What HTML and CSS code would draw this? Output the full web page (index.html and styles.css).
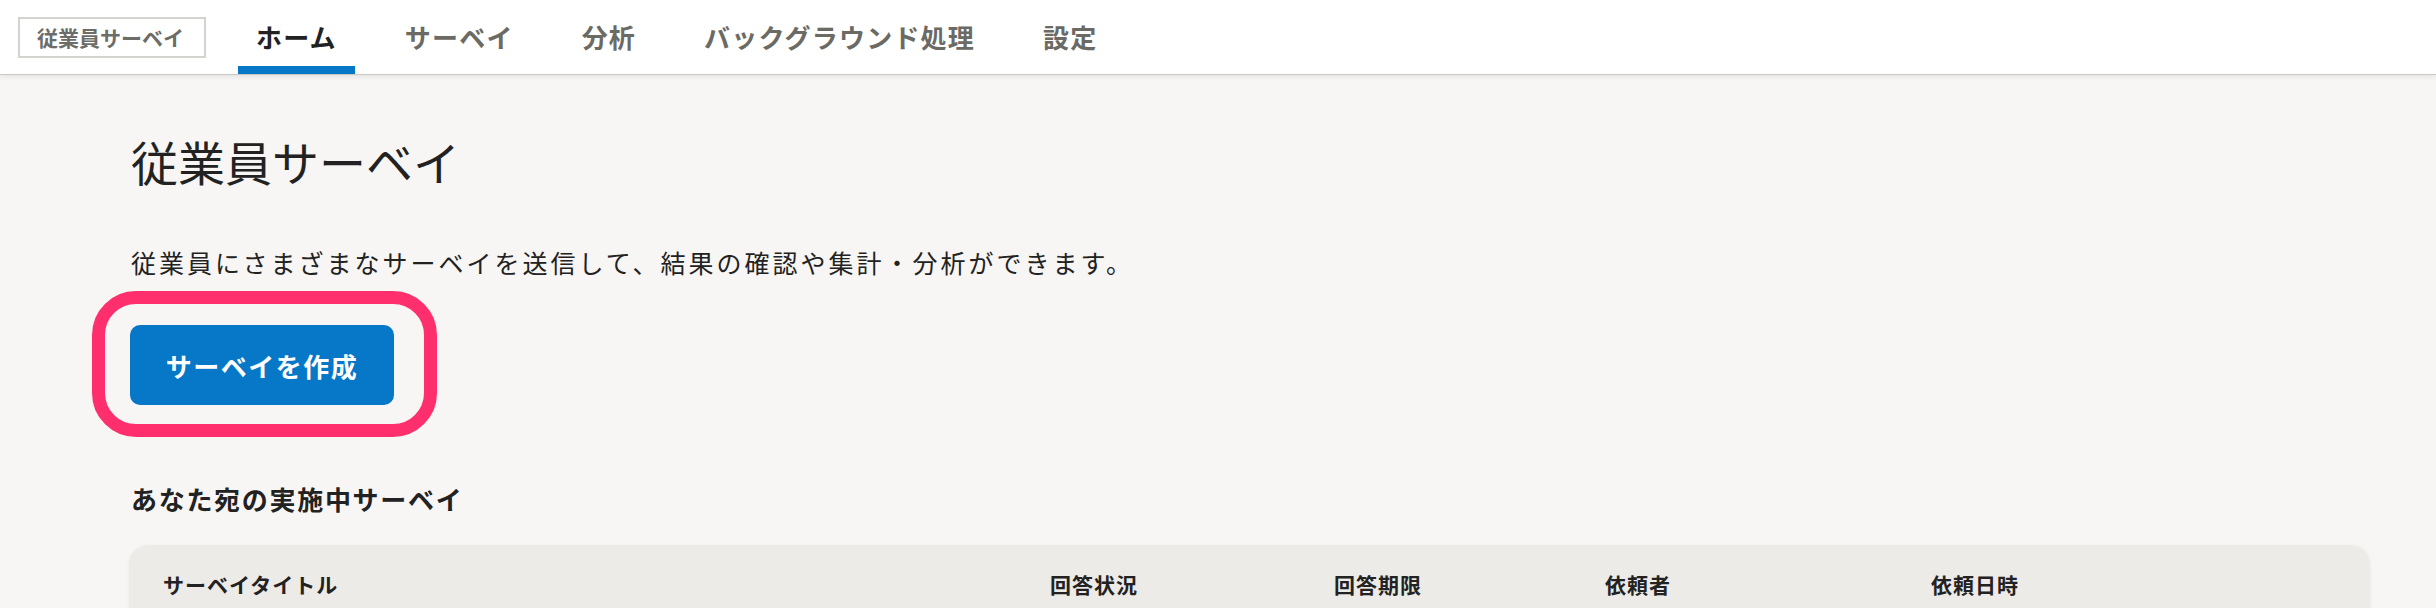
FILE: index.html
```html
<!DOCTYPE html>
<html lang="ja">
<head>
<meta charset="utf-8">
<title>従業員サーベイ</title>
<link rel="stylesheet" href="styles.css">
</head>
<body>
<header class="nav">
  <div class="logo">従業員サーベイ</div>
  <a class="tab active">ホーム</a>
  <a class="tab">サーベイ</a>
  <a class="tab">分析</a>
  <a class="tab">バックグラウンド処理</a>
  <a class="tab">設定</a>
</header>
<main class="main">
  <h1 class="title">従業員サーベイ</h1>
  <p class="desc">従業員にさまざまなサーベイを送信して、結果の確認や集計・分析ができます。</p>
  <div class="cta">
    <button class="btn">サーベイを作成</button>
    <span class="ring"></span>
  </div>
  <h2 class="section">あなた宛の実施中サーベイ</h2>
  <div class="card">
    <div class="thead">
      <div>サーベイタイトル</div>
      <div>回答状況</div>
      <div>回答期限</div>
      <div>依頼者</div>
      <div>依頼日時</div>
    </div>
    <div class="tbody"></div>
  </div>
</main>
</body>
</html>
```
FILE: styles.css
```css
* { box-sizing: border-box; }
html, body { margin: 0; padding: 0; }
body {
  background: #f7f6f4;
  font-family: "Noto Sans CJK JP", "Noto Sans", sans-serif;
  color: #222;
  overflow: hidden;
}
.nav {
  height: 74px;
  background: #fff;
  display: flex;
  align-items: stretch;
  gap: 32px;
  padding-left: 18px;
  box-shadow: 0 1px 0 #c9c9c7, 0 2px 6px rgba(0,0,0,0.10);
  position: relative;
  z-index: 1;
}
.logo {
  align-self: center;
  height: 41px;
  border: 2px solid #d3d3cf;
  padding: 0 20px 0 17px;
  display: flex;
  align-items: center;
  font-size: 21px;
  font-weight: 700;
  color: #6c6c68;
  line-height: 1;
}
.tab {
  display: flex;
  align-items: center;
  padding: 0 18px;
  font-size: 26px;
  font-weight: 700;
  letter-spacing: 1.2px;
  color: #6b6a64;
  text-decoration: none;
  line-height: 1;
}
.tab.active {
  color: #222;
  box-shadow: inset 0 -8px 0 #0777c8;
}
.main {
  padding: 0 66px 0 129px;
}
.title {
  margin: 63px 0 0;
  font-size: 47px;
  line-height: 47px;
  font-weight: 400;
  color: #222;
  padding-left: 2px;
}
.desc {
  margin: 66px 0 0;
  font-size: 25px;
  line-height: 25px;
  letter-spacing: 3px;
  color: #222;
  padding-left: 2px;
}
.cta {
  position: relative;
  margin-top: 50px;
  width: 264px;
  height: 80px;
  margin-left: 1px;
}
.btn {
  width: 264px;
  height: 80px;
  border: 0;
  border-radius: 10px;
  background: #0777c8;
  color: #fff;
  font-family: inherit;
  font-size: 26px;
  font-weight: 700;
  letter-spacing: 1.5px;
  padding: 0;
}
.ring {
  position: absolute;
  left: -38px;
  top: -34px;
  width: 345px;
  height: 146px;
  border: 13px solid #ff2f6e;
  border-radius: 44px;
  pointer-events: none;
}
.section {
  margin: 81px 0 0;
  font-size: 26px;
  line-height: 26px;
  font-weight: 700;
  letter-spacing: 1.7px;
  color: #222;
  padding-left: 2px;
}
.card {
  margin-top: 33px;
  background: #ecebe8;
  border-radius: 20px;
  box-shadow: 0 1px 4px rgba(0,0,0,0.06);
  min-height: 200px;
}
.thead {
  display: grid;
  grid-template-columns: 887px 284px 271px 326px 1fr;
  padding: 29px 34px 0;
  font-size: 21px;
  line-height: 21px;
  font-weight: 700;
  letter-spacing: 1px;
  color: #222;
}
```
